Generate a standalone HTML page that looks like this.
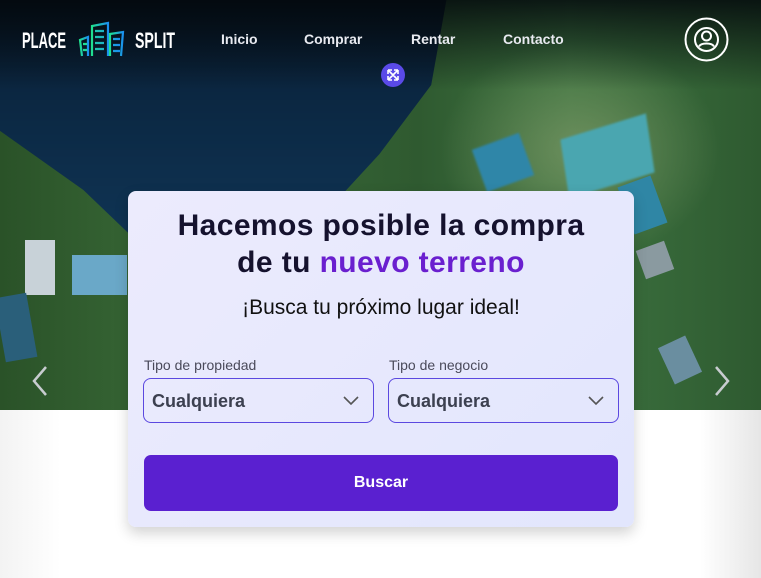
<!DOCTYPE html>
<html><head><meta charset="utf-8"><style>
*{margin:0;padding:0;box-sizing:border-box}
body{width:761px;height:578px;overflow:hidden;font-family:"Liberation Sans",sans-serif;background:#fff;position:relative}
.bottom{position:absolute;left:0;top:410px;width:761px;height:168px;background:linear-gradient(90deg,#f3f3f3 0%,#fff 8%,#fff 92%,#e6e6e6 100%)}
.hero{position:absolute;left:0;top:0;width:761px;height:410px;overflow:hidden;
background:
radial-gradient(ellipse 140px 110px at 580px 150px,rgba(120,150,100,.8) 0%,rgba(80,130,80,0) 100%),
linear-gradient(90deg,#2a5228 0%,#3a6b38 25%,#2f5a30 55%,#3d7340 75%,#2e5a30 100%)}
.blk{position:absolute}
.nav a{position:absolute;top:31px;color:#e8eaf0;font-size:14px;font-weight:bold;text-decoration:none}
.card{position:absolute;left:128px;top:191px;width:506px;height:336px;border-radius:8px;background:linear-gradient(135deg,#ecebfd,#e2e6fd);box-shadow:0 6px 14px rgba(0,0,0,.18)}
h1{position:absolute;left:0;width:506px;top:16px;text-align:center;font-size:30px;line-height:37px;font-weight:600;color:#15122e;letter-spacing:.4px}
h1 span{color:#6a1fcf}
.sub{position:absolute;left:0;width:506px;top:105px;text-align:center;font-size:21px;color:#111}
.lbl{position:absolute;top:166px;font-size:14px;color:#4a4a5a}
.sel{position:absolute;top:187px;width:231px;height:45px;border:1px solid #5b48e0;border-radius:8px;font-size:18px;font-weight:bold;color:#3c4050;padding:12px 0 0 8px}
.sel svg{position:absolute;right:14px;top:17px}
.btn{position:absolute;left:16px;top:264px;width:474px;height:56px;background:#5a20d0;border-radius:7px;color:#fff;font-weight:bold;font-size:16px;text-align:center;line-height:56px}
</style></head><body>
<div class="bottom"></div>
<div class="hero">
 <div class="blk" style="left:-20px;top:-20px;width:470px;height:300px;background:linear-gradient(180deg,#06121e 0%,#0b2640 35%,#10385a 100%);clip-path:polygon(0 0,100% 0,96% 35%,85% 58%,75% 75%,60% 88%,32% 85%,22% 70%,4% 50%);filter:blur(3px)"></div>
 <div class="blk" style="left:0;top:0;width:761px;height:90px;background:linear-gradient(180deg,rgba(3,8,12,.85),rgba(3,8,12,0))"></div>
 <div class="blk" style="left:565px;top:125px;width:85px;height:62px;background:#4aa6b0;transform:skewX(-10deg) rotate(-18deg);filter:blur(1px)"></div>
 <div class="blk" style="left:478px;top:140px;width:50px;height:45px;background:#2f86a8;transform:rotate(-20deg);filter:blur(1px)"></div>
 <div class="blk" style="left:625px;top:180px;width:35px;height:50px;background:#2f86a5;transform:rotate(-20deg)"></div>
 <div class="blk" style="left:25px;top:240px;width:30px;height:55px;background:#c8d2d8"></div>
 <div class="blk" style="left:72px;top:255px;width:55px;height:40px;background:#6aa8c8"></div>
 <div class="blk" style="left:0;top:295px;width:32px;height:65px;background:#2a5f7a;transform:rotate(-10deg)"></div>
 <div class="blk" style="left:640px;top:245px;width:30px;height:30px;background:#8a9aa0;transform:rotate(-20deg)"></div>
 <div class="blk" style="left:665px;top:340px;width:30px;height:40px;background:#6a8ea0;transform:rotate(-25deg)"></div>
</div>
<svg style="position:absolute;left:22px;top:20px" width="155" height="40">
 <text x="0" y="28" font-family="Liberation Sans Narrow,Liberation Sans,sans-serif" font-weight="bold" font-size="22" fill="#fff" textLength="44" lengthAdjust="spacingAndGlyphs">PLACE</text>
 <text x="113" y="28" font-family="Liberation Sans Narrow,Liberation Sans,sans-serif" font-weight="bold" font-size="22" fill="#fff" textLength="40" lengthAdjust="spacingAndGlyphs">SPLIT</text>
 <defs><linearGradient id="g" x1="0" x2="1"><stop offset="0" stop-color="#20e090"/><stop offset="1" stop-color="#1a90f0"/></linearGradient></defs>
 <g fill="none" stroke="url(#g)" stroke-width="2.2">
  <path d="M60 36 L58 20 L66 17 L66 36"/><path d="M70 36 V6 L86 3 V36"/><path d="M88 36 V14 L101 12 L99 36"/>
  <path d="M73 11h9M73 17h9M73 23h9M73 29h9M61 24h4M61 30h4M91 19h7M91 25h7M91 31h7"/>
 </g>
</svg>
<div class="nav">
 <a style="left:221px">Inicio</a><a style="left:304px">Comprar</a><a style="left:411px">Rentar</a><a style="left:503px">Contacto</a>
</div>
<svg style="position:absolute;left:684px;top:17px" width="46" height="46" fill="none" stroke="#fff" stroke-width="2">
 <circle cx="22.5" cy="22.5" r="21"/><circle cx="22.5" cy="22.5" r="11.5"/><circle cx="22.5" cy="19" r="4.5"/><path d="M15 29.5c2-4 13-4 15 0"/>
</svg>
<svg style="position:absolute;left:381px;top:63px" width="24" height="24"><circle cx="12" cy="12" r="12" fill="#5a4ae8"/><path d="M7 7l10 10M17 7L7 17M7 7h4M7 7v4M17 7h-4M17 7v4M7 17h4M7 17v-4M17 17h-4M17 17v-4" stroke="#fff" stroke-width="1.6" fill="none"/></svg>
<svg style="position:absolute;left:30px;top:365px" width="20" height="32"><path d="M16 2L4 16l12 14" stroke="#c8ccd0" stroke-width="2.5" fill="none"/></svg>
<svg style="position:absolute;left:712px;top:365px" width="20" height="32"><path d="M4 2l12 14L4 30" stroke="#c8ccd0" stroke-width="2.5" fill="none"/></svg>
<div class="card">
 <h1>Hacemos posible la compra<br>de tu <span>nuevo terreno</span></h1>
 <div class="sub">¡Busca tu próximo lugar ideal!</div>
 <div class="lbl" style="left:16px">Tipo de propiedad</div>
 <div class="lbl" style="left:261px">Tipo de negocio</div>
 <div class="sel" style="left:15px">Cualquiera<svg width="16" height="10"><path d="M1 1l7 7 7-7" stroke="#555" stroke-width="1.6" fill="none"/></svg></div>
 <div class="sel" style="left:260px">Cualquiera<svg width="16" height="10"><path d="M1 1l7 7 7-7" stroke="#555" stroke-width="1.6" fill="none"/></svg></div>
 <div class="btn">Buscar</div>
</div>
</body></html>
